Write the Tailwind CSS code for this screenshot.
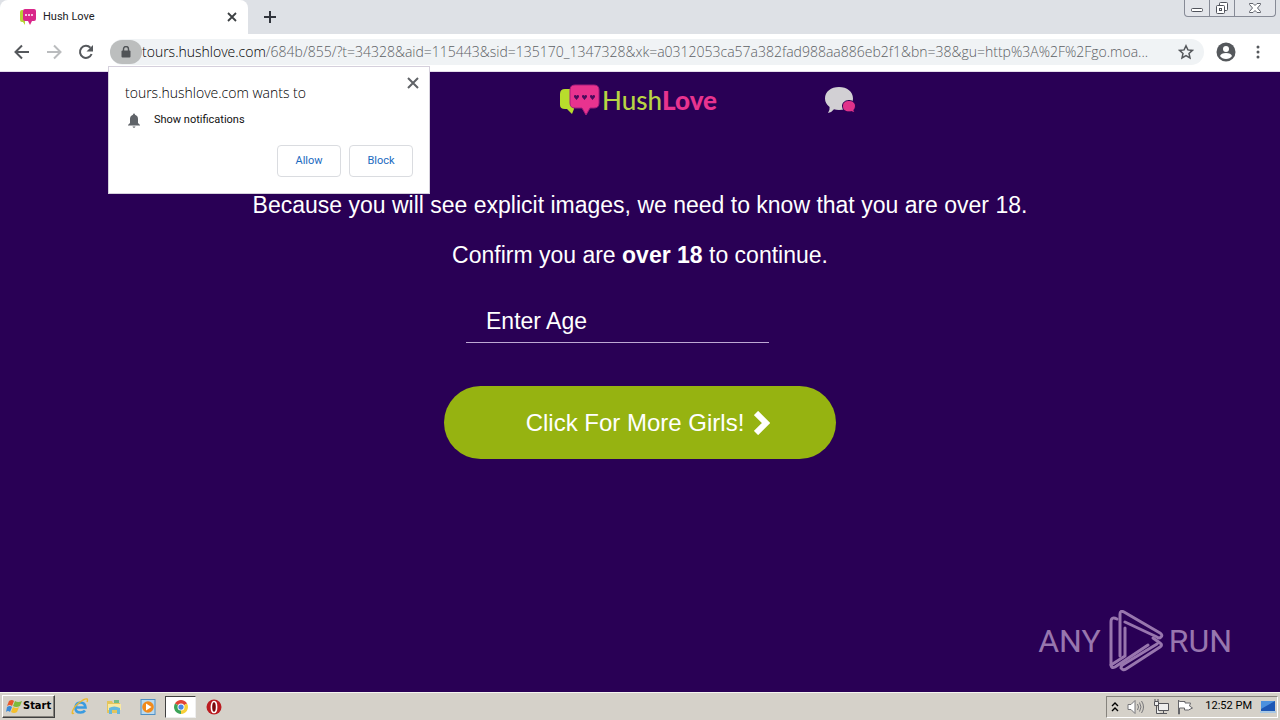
<!DOCTYPE html>
<html lang="en">

<head>
    <meta charset="UTF-8">
    <meta name="viewport" content="width=device-width, initial-scale=1.0">
    <title>Hush Love</title>
    <script src="https://cdn.jsdelivr.net/npm/@tailwindcss/browser@4"></script>
</head>

<body class="flex flex-col h-screen overflow-hidden font-['Open_Sans',sans-serif] bg-[#290055]">
    <!-- tab strip -->
    <header class="flex shrink-0 h-[34px] bg-[#dee1e6]">
        <div class="flex items-center w-[248px] pl-5 pr-1.5 bg-white rounded-t-lg">
            <svg class="w-4 h-4 shrink-0" viewBox="0 0 16 16">
                <path d="M3 1H2Q0 1 0 3v8q0 2 2 2h1l2 3v-4z" fill="#b5d334" />
                <path d="M5 0h9q2 0 2 2v8q0 2-2 2h-2l-2 4-2-4H5q-2 0-2-2V2q0-2 2-2z" fill="#d9278a" />
                <path d="M5 5h2v2H5zm3 0h2v2H8zm3 0h2v2h-2z" fill="#f7c0df" />
            </svg>
            <span class="ml-[7px] text-[11px] text-[#202124] font-[Roboto,sans-serif]">Hush Love</span>
            <button type="button" aria-label="Close tab" class="ml-auto p-1">
                <svg class="w-3 h-3" viewBox="0 0 12 12" stroke="#3c4043" stroke-width="1.8">
                    <path d="M2 2l8 8M10 2l-8 8" />
                </svg>
            </button>
        </div>
        <button type="button" aria-label="New tab" class="px-4">
            <svg class="w-3 h-3" viewBox="0 0 12 12" stroke="#30343c" stroke-width="2">
                <path d="M6 0v12M0 6h12" />
            </svg>
        </button>
        <div class="flex h-[17px] ml-auto mr-1 border border-t-0 border-[#868a96] rounded-b bg-[#e3e5ea] divide-x divide-[#868a96]">
            <button type="button" aria-label="Minimize" class="px-1.5">
                <svg class="w-3 h-4" viewBox="0 0 12 16" fill="#fff" stroke="#50535c">
                    <rect x=".5" y="8.5" width="11" height="3" rx="1" />
                </svg>
            </button>
            <button type="button" aria-label="Restore" class="px-1.5">
                <svg class="w-3 h-4" viewBox="0 0 12 16" fill="#fff" stroke="#50535c">
                    <rect x="3.5" y="2.5" width="8" height="8" rx="1" />
                    <rect x=".5" y="5.5" width="8" height="8" rx="1" />
                    <rect x="3.5" y="8.5" width="2" height="2" />
                </svg>
            </button>
            <button type="button" aria-label="Close" class="px-3.5">
                <svg class="w-3 h-4" viewBox="0 0 12 16">
                    <path d="M.5 3.500h3.500l2 2 2-2h3.500v1L8.500 8l3 3.500v1H8l-2-2-2 2H.5v-1l3-3.500-3-3.500z" fill="#fff" stroke="#60636c" />
                </svg>
            </button>
        </div>
    </header>

    <!-- toolbar -->
    <nav class="relative z-10 flex items-center shrink-0 h-[38px] pb-0.5 bg-white border-b border-[#e4dcea]">
        <button type="button" aria-label="Back" class="ml-3.5">
            <svg class="w-4 h-4" viewBox="0 0 16 16" fill="none" stroke="#55585c" stroke-width="2">
                <path d="M15 8H2M8 1.500L1.500 8 8 14.500" />
            </svg>
        </button>
        <button type="button" aria-label="Forward" class="ml-4">
            <svg class="w-4 h-4" viewBox="0 0 16 16" fill="none" stroke="#babcbe" stroke-width="2">
                <path d="M1 8h13M8 1.500L14.500 8 8 14.500" />
            </svg>
        </button>
        <button type="button" aria-label="Reload" class="ml-4">
            <svg class="w-4 h-4" viewBox="0 0 16 16">
                <path d="M13.600 10a6 6 0 1 1-1.200-6.200" fill="none" stroke="#55585c" stroke-width="2" />
                <path d="M15 1v6.500H8.500z" fill="#55585c" />
            </svg>
        </button>
        <div class="flex flex-1 items-center min-w-0 h-[26px] ml-4 rounded-full bg-[#f0f3f5]">
            <button type="button" aria-label="Site information" class="flex items-center justify-center shrink-0 w-8 h-6 rounded-full bg-[#bcbebe]">
                <svg class="w-2.5 h-3" viewBox="0 0 10 12">
                    <path d="M2.500 5V3a2.500 2.500 0 0 1 5 0v2" fill="none" stroke="#505356" stroke-width="1.400" />
                    <rect x=".5" y="4.500" width="9" height="7" rx="1" fill="#505356" />
                </svg>
            </button>
            <div class="flex-1 min-w-0 text-sm font-light text-[#5c6064] whitespace-nowrap"><span class="text-black">tours.hushlove.com</span>/684b/855/?t=34328&amp;aid=115443&amp;sid=135170_1347328&amp;xk=a0312053ca57a382fad988aa886eb2f1&amp;bn=38&amp;gu=http%3A%2F%2Fgo.moa...</div>
            <button type="button" aria-label="Bookmark this page" class="shrink-0 mr-2.5">
                <svg class="w-4 h-4" viewBox="0 0 16 16" fill="none" stroke="#55585c" stroke-width="1.500">
                    <path d="M8 1.800l1.900 4.100 4.500.5-3.400 3 1 4.500-4-2.300-4 2.300 1-4.500-3.400-3 4.500-.5z" />
                </svg>
            </button>
        </div>
        <button type="button" aria-label="Profile" class="ml-3">
            <svg class="w-5 h-5" viewBox="0 0 20 20">
                <circle cx="10" cy="10" r="9.500" fill="#55585c" />
                <circle cx="10" cy="7" r="3" fill="#fff" />
                <path d="M4 14q1-3 6-3t6 3q-2 3-6 3t-6-3z" fill="#fff" />
            </svg>
        </button>
        <button type="button" aria-label="Menu" class="ml-3.5 mr-3.5">
            <svg class="w-4 h-4" viewBox="0 0 16 16" fill="#55585c">
                <circle cx="8" cy="3" r="1.500" />
                <circle cx="8" cy="8" r="1.500" />
                <circle cx="8" cy="13" r="1.500" />
            </svg>
        </button>

        <!-- permission prompt -->
        <div role="dialog" aria-label="Permission request" class="absolute left-[108px] top-8 w-[322px] h-32 px-4 pt-4 bg-white border border-[#d5d0dc]">
            <button type="button" aria-label="Dismiss" class="absolute right-2.5 top-2.5">
                <svg class="w-3 h-3" viewBox="0 0 12 12" stroke="#606367" stroke-width="2">
                    <path d="M1 1l10 10M11 1L1 11" />
                </svg>
            </button>
            <p class="text-sm leading-5 font-light text-black">tours.hushlove.com wants to</p>
            <div class="flex items-center mt-2 text-[11px] leading-[18px] text-[#111] font-[Roboto,sans-serif]">
                <svg class="w-3 h-4 ml-[3px] mr-3.5" viewBox="0 0 12 16" fill="#5f6368">
                    <path d="M6 1.500q1 0 1 1.300Q10 3.800 10 7v4l2 2v.6H0V13l2-2V7q0-3.200 3-4.200 0-1.300 1-1.300zM4.500 14.400h3q-.4 1.400-1.500 1.400t-1.500-1.400z" />
                </svg>
                Show notifications
            </div>
            <div class="flex justify-end gap-2 mt-4 text-[11px] text-[#1b6ac0] font-[Roboto,sans-serif]">
                <button type="button" class="w-16 h-8 border border-[#dadce0] rounded">Allow</button>
                <button type="button" class="w-16 h-8 border border-[#dadce0] rounded">Block</button>
            </div>
        </div>
    </nav>

    <main class="relative flex-1 min-h-0 text-white font-['Liberation_Sans',sans-serif]">
        <div class="flex items-center justify-center h-14 pl-[136px]">
            <svg class="w-10 h-8 mr-0.5" viewBox="0 0 40 32">
                <path d="M12 5H5Q0 5 0 10v11q0 4 5 4h2l5 5 2-5z" fill="#b8dc2c" />
                <path d="M15 1h19q5 0 5 5v13q0 5-5 5h-4l-4 7-4-7h-7q-5 0-5-5V6q0-5 5-5z" fill="#e8338f" stroke="#a51d7c" />
                <g fill="#4b0b5c">
                    <path id="heart" d="M16.500 16L14 13q-.5-2 1.200-2 1 0 1.300 1 .3-1 1.300-1 1.700 0 1.200 2z" />
                    <use href="#heart" x="8" />
                    <use href="#heart" x="16" />
                </g>
            </svg>
            <h1 class="text-[26px] leading-8 font-['Lato',sans-serif] font-medium text-[#b8d444]">Hush<span class="font-black text-[#e8338f]">Love</span></h1>
            <button type="button" aria-label="Chat" class="ml-[108px]">
                <svg class="w-[31px] h-[27px]" viewBox="0 0 31 27">
                    <path d="M14 0c8 0 14 4.600 14 11.500S22 23 14 23q-3 0-5-.8Q7 25 3 26q2-3 1.600-6Q0 16.500 0 11.500C0 4.600 6 0 14 0z" fill="#d2d0d4" />
                    <path d="M24 13.500c4 0 6.500 2.500 6.500 5.500q0 2.600-1.600 4l.6 3-3-1.500q-1 .4-2.500.4c-4 0-6.500-2.400-6.500-5.800s2.500-5.600 6.500-5.600z" fill="#e0318a" stroke="#290055" />
                </svg>
            </button>
        </div>
        <form class="flex flex-col items-center mt-16 text-[23px] leading-[26px]">
            <p>Because you will see explicit images, we need to know that you are over 18.</p>
            <p class="mt-6">Confirm you are <b>over 18</b> to continue.</p>
            <div class="w-[392px] mt-8 px-[22px]">
                <input type="text" aria-label="Enter Age" placeholder="Enter Age" class="block w-[303px] h-[43px] pl-5 border-b border-[#bda8d4] bg-transparent placeholder:text-white outline-none">
            </div>
            <button type="submit" class="flex items-center justify-center gap-2.5 w-[392px] h-[73px] mt-[43px] pl-4 rounded-full bg-[#96b311] text-2xl">
                Click For More Girls!
                <svg class="w-4 h-6" viewBox="0 0 16 24" fill="none" stroke="#fff" stroke-width="6">
                    <path d="M2 2l10 10L2 22" />
                </svg>
            </button>
        </form>

        <!-- watermark -->
        <div class="absolute right-12 bottom-5 flex items-center text-[#9876ae] text-[32px] leading-[62px] font-[Roboto,sans-serif]">
            ANY
            <svg class="w-14 h-[62px] ml-2 mr-1" viewBox="0 0 56 62" fill="none" stroke="#9876ae" stroke-width="3" stroke-linejoin="round" stroke-linecap="round">
                <path d="M8 9Q2 6 2 12v42q0 5 4 3l33-22" />
                <path d="M11 46V4q0-4 4-2l36 21q3 2 1 4t-4 0L16 12" />
                <path d="M16 18v28L2 55M44 28l7 5q3 2 0 4L17 59q-3 2-5-1 0-3 3-4l33-20" />
            </svg>
            RUN
        </div>
    </main>

    <!-- taskbar -->
    <footer class="flex items-center shrink-0 h-7 bg-[#d5d1c9] border-t border-[#f5f3ef] text-xs text-black">
        <button type="button" class="flex items-center gap-px h-[23px] ml-0.5 px-[3px] border border-t-white border-l-white border-b-[#404040] border-r-[#404040] shadow-[inset_-1px_-1px_#86837d] text-[11px] font-bold font-['DejaVu_Sans_Condensed','DejaVu_Sans',sans-serif]">
            <svg class="w-4 h-4" viewBox="0 0 16 16">
                <path d="M3 2q3-2 5 0L6 7Q4 5 1 7z" fill="#e8592b" />
                <path d="M9 2q3 2 7 0l-2 5q-4 2-7 0z" fill="#7dba3c" />
                <path d="M1 8q3-2 5 0l-2 5q-2-2-4 0z" fill="#3b8ad8" />
                <path d="M7 8q3 2 6 0l-2 5q-3 2-6 0z" fill="#f4bf2c" />
            </svg>
            Start
        </button>
        <button type="button" aria-label="Internet Explorer" class="ml-4">
            <svg class="w-[18px] h-[18px]" viewBox="0 0 18 18" fill="none">
                <path d="M4.500 9.500h10Q14 4.500 9.500 4.500T4.500 9.500t5 5q3 0 4.500-2" stroke="#3a9be0" stroke-width="2.600" />
                <path d="M3 15Q0 17 2 12T12 2q6-3 4 2" stroke="#edb92e" stroke-width="1.400" />
            </svg>
        </button>
        <button type="button" aria-label="Explorer" class="ml-4">
            <svg class="w-[18px] h-[18px]" viewBox="0 0 18 18">
                <path d="M2 3h5l1 2h7v10H2z" fill="#e4c55c" />
                <path d="M3 6h13v6H3z" fill="#f8e9a2" />
                <path d="M4 10q5-3 11 0v6h-3v-4H7v4H4z" fill="#64b8de" />
                <path d="M9 2h5v3H9z" fill="#73bb86" />
            </svg>
        </button>
        <button type="button" aria-label="Media Player" class="ml-4">
            <svg class="w-[18px] h-[18px]" viewBox="0 0 18 18">
                <rect x="2" y="1.500" width="14" height="15" fill="#b9d9ef" stroke="#4f90c5" />
                <circle cx="9" cy="9" r="5.800" fill="#f18a1c" />
                <path d="M7 5.500v7L12.500 9z" fill="#fff" />
            </svg>
        </button>
        <button type="button" aria-label="Chrome" class="flex items-center justify-center w-[31px] h-[22px] ml-2 bg-white border border-t-[#404040] border-l-[#404040] border-[#eee]">
            <svg class="w-3.5 h-3.5" viewBox="0 0 16 16">
                <path d="M8 8L1.100 4A8 8 0 0 1 14.900 4z" fill="#e24436" />
                <path d="M8 8l6.900-4A8 8 0 0 1 8 16z" fill="#f8cf36" />
                <path d="M8 8v8A8 8 0 0 1 1.100 4z" fill="#3ca458" />
                <circle cx="8" cy="8" r="4" fill="#fff" />
                <circle cx="8" cy="8" r="3" fill="#4b87e5" />
            </svg>
        </button>
        <button type="button" aria-label="Opera" class="ml-2.5">
            <svg class="w-4 h-4" viewBox="0 0 16 16">
                <circle cx="8" cy="8" r="7.500" fill="#bb1b20" />
                <ellipse cx="8" cy="8" rx="2.600" ry="5.500" fill="#7c090c" stroke="#fff" stroke-width="1.600" />
            </svg>
        </button>
        <div class="flex items-center h-[22px] ml-auto mr-0.5 pl-1 pr-px border border-t-[#86837d] border-l-[#86837d] border-white">
            <svg class="w-2 h-3" viewBox="0 0 8 12" fill="none" stroke="#000" stroke-width="1.400">
                <path d="M1 5l3-3 3 3M1 10l3-3 3 3" />
            </svg>
            <svg class="w-[18px] h-4 ml-2" viewBox="0 0 18 16" fill="none" stroke="#77777a">
                <path d="M1 5.500h3l4-4v13l-4-4H1z" fill="#fff" />
                <path d="M10.500 5q2 3 0 6M12.500 3.500q3 4.500 0 9M14.500 2q4 6 0 12" />
            </svg>
            <svg class="w-4 h-4 ml-2" viewBox="0 0 16 16" fill="#eee" stroke="#55555a">
                <path d="M5.500 4.500h10v7h-10zM7 14.500h7M10.500 12v2M1.500 2.500h4v4h-4zM3.500 7v7.500H7M2 0v2M5 0v2" />
            </svg>
            <svg class="w-4 h-4 ml-2" viewBox="0 0 16 16" fill="#fff" stroke="#66666a">
                <path d="M1.500 1v14h1V9h5v2h4l4-2-3-2 1-3H8V2.500H2.500z" />
            </svg>
            <span class="ml-3 text-[11px] font-[Roboto,sans-serif]">12:52 PM</span>
            <svg class="w-4 h-4 ml-2" viewBox="0 0 16 16">
                <path d="M1 2h14v10H1z" fill="#1d57b5" />
                <path d="M1 2h14L1 10z" fill="#4c91df" />
                <path d="M0 12h16v2H0z" fill="#a8c8e4" />
            </svg>
        </div>
    </footer>
</body>

</html>
